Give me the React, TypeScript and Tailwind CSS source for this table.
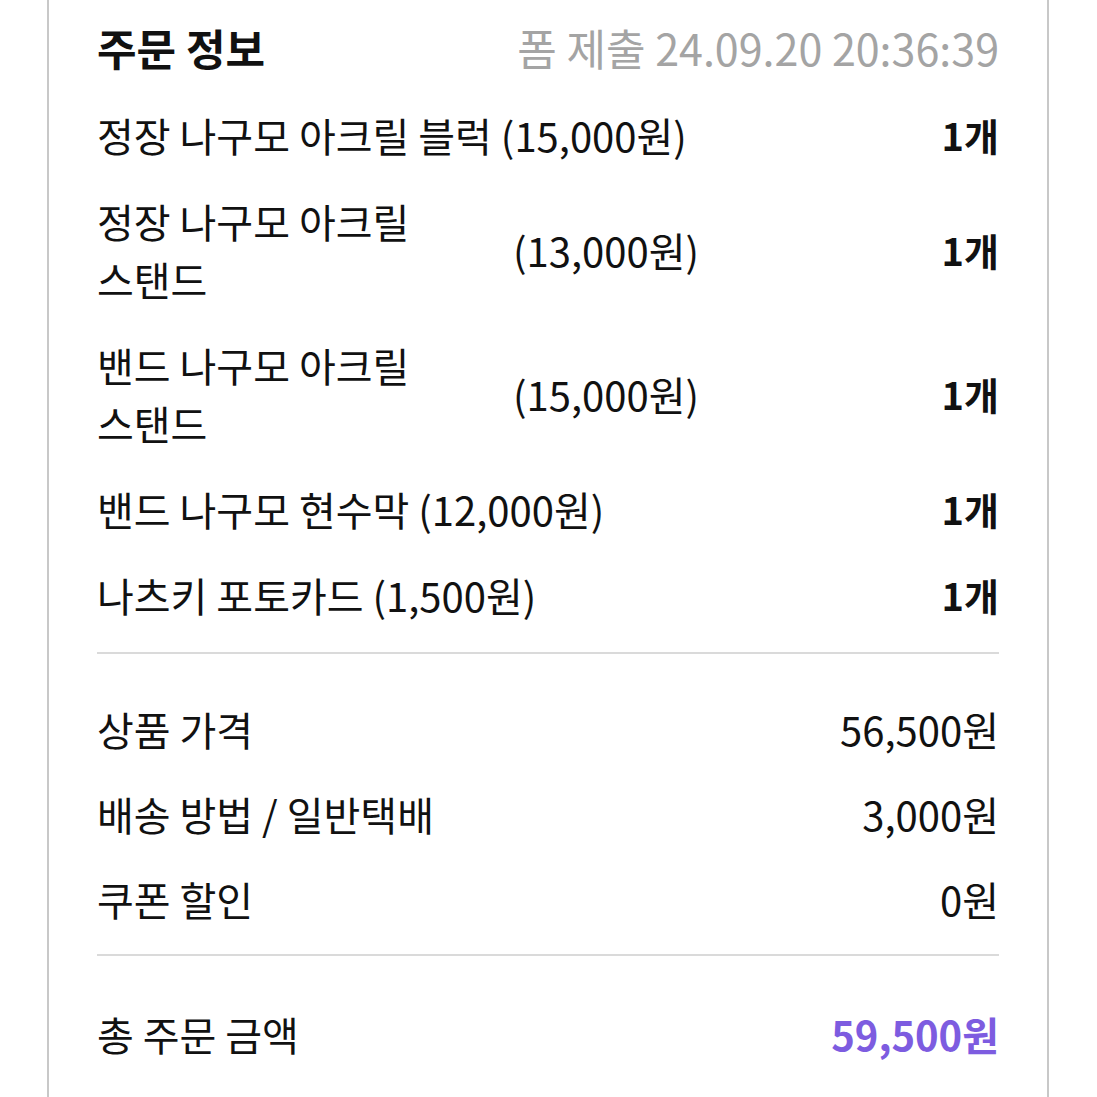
const font = { fontFamily: '"Noto Sans CJK KR", "Noto Sans", sans-serif' };

type Item = { name: string[]; price: string; qty: number };

const items: Item[] = [
  { name: ["정장 나구모 아크릴 블럭"], price: "(15,000원)", qty: 1 },
  { name: ["정장 나구모 아크릴", "스탠드"], price: "(13,000원)", qty: 1 },
  { name: ["밴드 나구모 아크릴", "스탠드"], price: "(15,000원)", qty: 1 },
  { name: ["밴드 나구모 현수막"], price: "(12,000원)", qty: 1 },
  { name: ["나츠키 포토카드"], price: "(1,500원)", qty: 1 },
];

const summary = [
  { label: "상품 가격", value: "56,500원" },
  { label: "배송 방법 / 일반택배", value: "3,000원" },
  { label: "쿠폰 할인", value: "0원" },
];

export default function App() {
  return (
    <div className="h-[1097px] overflow-hidden bg-white pl-[47px] pr-[48px] text-[#111]" style={font}>
      <div className="h-full border-x-2 border-[#c8c8c8] px-[48px] pt-[18px]">
        {/* 헤더 */}
        <div className="flex h-[58px] items-center justify-between">
          <h1 className="text-[43px] font-bold">주문 정보</h1>
          <span className="text-[43px] text-[#a4a4a4]">폼 제출 24.09.20 20:36:39</span>
        </div>

        {/* 주문 상품 */}
        <div className="mt-[30px] flex flex-col gap-[28px] text-[40px] leading-[58px]">
          {items.map((item) => (
            <div key={item.name.join()} className="flex items-center justify-between">
              {item.name.length > 1 ? (
                <div className="flex items-center">
                  <span className="w-[416px]">
                    {item.name[0]}
                    <br />
                    {item.name[1]}
                  </span>
                  <span>{item.price}</span>
                </div>
              ) : (
                <span>
                  {item.name[0]} {item.price}
                </span>
              )}
              <span className="text-[38px] font-bold">{item.qty}개</span>
            </div>
          ))}
        </div>

        <div className="mt-[28px] h-[2px] bg-[#dadada]" />

        {/* 금액 */}
        <div className="mt-[46px] flex flex-col gap-[27px] text-[40px] leading-[58px]">
          {summary.map((s) => (
            <div key={s.label} className="flex items-center justify-between">
              <span>{s.label}</span>
              <span>{s.value}</span>
            </div>
          ))}
        </div>

        <div className="mt-[26px] h-[2px] bg-[#dadada]" />

        <div className="mt-[49px] flex items-center justify-between text-[40px] leading-[58px]">
          <span>총 주문 금액</span>
          <span className="font-bold text-[#7d5ce0]">59,500원</span>
        </div>
      </div>
    </div>
  );
}
